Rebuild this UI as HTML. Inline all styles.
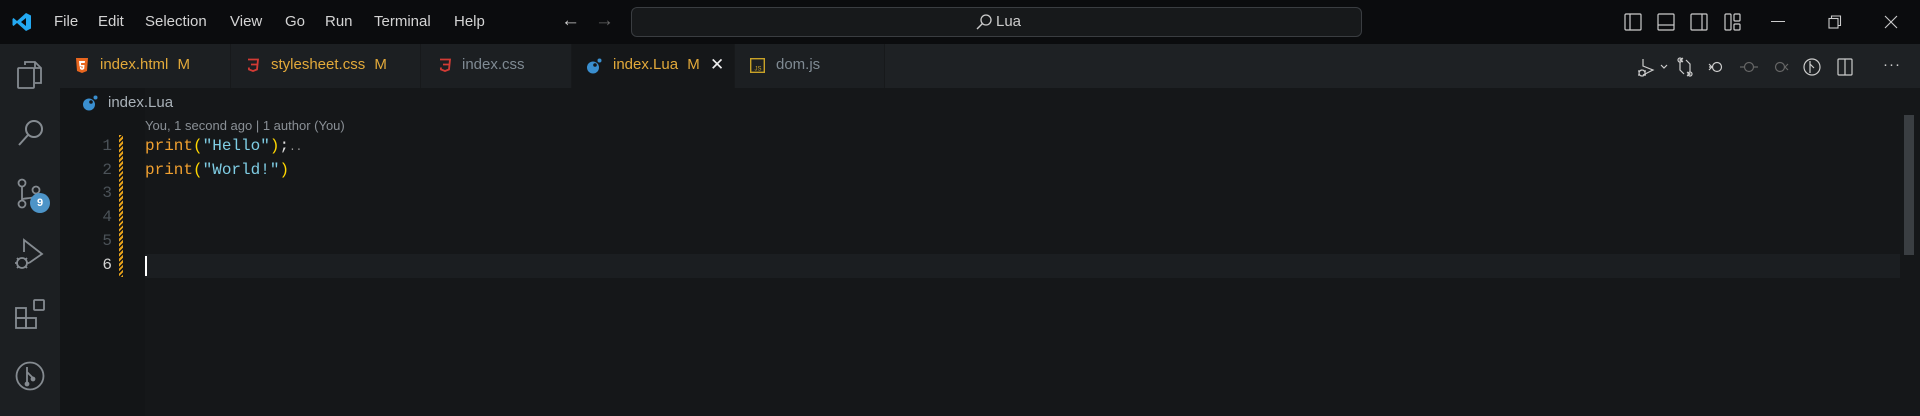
<!DOCTYPE html>
<html><head><meta charset="utf-8"><style>
*{margin:0;padding:0;box-sizing:border-box}
body{width:1920px;height:416px;background:#151719;overflow:hidden;position:relative;font-family:"Liberation Sans",sans-serif;color:#ccc}
.a{position:absolute}
.title{left:0;top:0;width:1920px;height:44px;background:#0b0c0e}
.menu{top:13px;font-size:15px;color:#d4d4d4}
.act{left:0;top:44px;width:60px;height:372px;background:#1c1f22}
.tabs{left:60px;top:44px;width:1860px;height:44px;background:#1e2124}
.tab{top:44px;height:44px;border-right:1px solid #17191b;background:#1c1f22}
.tt{top:56px;font-size:15px}
.mono{font-family:"Liberation Mono",monospace;font-size:16px}
.ln{width:40px;text-align:right;left:72px;color:#4b5258}
svg{position:absolute}
</style></head><body>
<div class="a title"></div>
<svg style="left:12px;top:12px" width="20" height="20" viewBox="0 0 20 20"><path d="M14 1 L19 3.5 V16.5 L14 19 L5 11 L1.5 14 L0.5 13 V7 L1.5 6 L5 9 Z M14 6 L9 10 L14 14 Z" fill="#23a9f2"/></svg>
<div class="a menu" style="left:54px">File</div>
<div class="a menu" style="left:98px">Edit</div>
<div class="a menu" style="left:145px">Selection</div>
<div class="a menu" style="left:230px">View</div>
<div class="a menu" style="left:285px">Go</div>
<div class="a menu" style="left:325px">Run</div>
<div class="a menu" style="left:374px">Terminal</div>
<div class="a menu" style="left:454px">Help</div>
<div class="a" style="left:561px;top:10px;font-size:19px;color:#ccc">←</div>
<div class="a" style="left:595px;top:10px;font-size:19px;color:#666">→</div>
<div class="a" style="left:631px;top:7px;width:731px;height:30px;border:1px solid #3a3d41;border-radius:6px;background:#17191b"></div>
<svg style="left:975px;top:13px" width="18" height="18" viewBox="0 0 18 18"><circle cx="11" cy="7" r="5" fill="none" stroke="#ccc" stroke-width="1.3"/><path d="M7.5 10.5 L2 16" stroke="#ccc" stroke-width="1.4"/></svg>
<div class="a" style="left:996px;top:13px;font-size:15px;color:#ccc">Lua</div>
<svg style="left:1624px;top:13px" width="140" height="18" viewBox="0 0 140 18" fill="none" stroke="#ccc" stroke-width="1.2"><rect x="1" y="1" width="16" height="16" rx="1"/><path d="M6 1v16"/><rect x="34" y="1" width="16" height="16" rx="1"/><path d="M34 12h16"/><rect x="67" y="1" width="16" height="16" rx="1"/><path d="M78 1v16"/><rect x="101" y="1" width="6" height="16" rx="1"/><rect x="110" y="1" width="6" height="7" rx="1"/><rect x="110" y="11" width="6" height="6" rx="1"/></svg>
<div class="a" style="left:1771px;top:21px;width:14px;height:1px;background:#ccc"></div>
<svg style="left:1828px;top:15px" width="14" height="14" viewBox="0 0 14 14" fill="none" stroke="#ccc" stroke-width="1.1"><rect x="1" y="3.5" width="9" height="9.5"/><path d="M3.5 3.5V1h9v9.5H10"/></svg>
<svg style="left:1884px;top:15px" width="14" height="14" viewBox="0 0 14 14" stroke="#ccc" stroke-width="1.1"><path d="M1 1L13 13M13 1L1 13"/></svg>

<div class="a act"></div>
<svg style="left:16px;top:60px" width="28" height="30" viewBox="0 0 28 30" fill="none" stroke="#858b91" stroke-width="1.8"><path d="M9 5V2h10l6 6v15h-6"/><path d="M19 2v6h6"/><rect x="2" y="8" width="16" height="20" rx="1"/></svg>
<svg style="left:16px;top:118px" width="30" height="30" viewBox="0 0 30 30" fill="none" stroke="#858b91" stroke-width="2"><circle cx="18" cy="11" r="8"/><path d="M12 17L3 27"/></svg>
<svg style="left:14px;top:178px" width="30" height="32" viewBox="0 0 30 32" fill="none" stroke="#858b91" stroke-width="1.8"><circle cx="8" cy="5" r="3.5"/><circle cx="8" cy="26" r="3.5"/><circle cx="22" cy="12" r="3.5"/><path d="M8 9v13M22 16c0 6-14 3-14 6"/></svg>
<div class="a" style="left:30px;top:193px;width:20px;height:20px;border-radius:50%;background:#4d94c8;color:#fff;font-size:11px;font-weight:bold;text-align:center;line-height:20px">9</div>
<svg style="left:14px;top:238px" width="32" height="32" viewBox="0 0 32 32" fill="none" stroke="#858b91" stroke-width="1.8"><path d="M10 14V2l18 14-13 9"/><circle cx="8" cy="25" r="5"/><path d="M1 25h3M12 25h3M3 20l2 2M13 20l-2 2M3 30l2-2M13 30l-2-2"/></svg>
<svg style="left:14px;top:298px" width="32" height="32" viewBox="0 0 32 32" fill="none" stroke="#858b91" stroke-width="1.8"><rect x="2" y="10" width="10" height="10"/><rect x="2" y="20" width="10" height="10"/><rect x="12" y="20" width="10" height="10"/><rect x="20" y="2" width="10" height="10" rx="1"/></svg>
<svg style="left:14px;top:360px" width="32" height="32" viewBox="0 0 32 32" fill="none" stroke="#858b91" stroke-width="1.8"><circle cx="16" cy="16" r="13.5"/><path d="M13 7v17M13 12l6 6v3" /><circle cx="13" cy="24" r="1.5" fill="#858b91"/><circle cx="19" cy="19" r="1.5" fill="#858b91"/></svg>

<div class="a tabs"></div>
<div class="a tab" style="left:60px;width:171px"></div>
<div class="a tab" style="left:231px;width:190px"></div>
<div class="a tab" style="left:421px;width:151px"></div>
<div class="a tab" style="left:572px;width:163px;background:#151719"></div>
<div class="a tab" style="left:735px;width:150px"></div>
<svg style="left:76px;top:58px" width="12" height="15" viewBox="0 0 12 15"><path d="M0 0h12l-1 13-5 2-5-2z" fill="#e8661f"/><path d="M3 3h6l-.3 2H5l.1 2h3.4l-.3 4L6 12l-2-1-.1-2h1.5l.1 1 .5.2.6-.2.1-1.5H3.5z" fill="#fff"/></svg>
<div class="a tt" style="left:100px;color:#e2a93a">index.html <span style="margin-left:5px">M</span></div>
<svg style="left:247px;top:58px" width="12" height="14" viewBox="0 0 12 14" fill="none" stroke="#d23b35" stroke-width="1.8"><path d="M1 1.5h10l-1 10-4 1.5-4-1.5-.2-2M4 6.5h6"/></svg>
<div class="a tt" style="left:271px;color:#e2a93a">stylesheet.css <span style="margin-left:5px">M</span></div>
<svg style="left:439px;top:58px" width="12" height="14" viewBox="0 0 12 14" fill="none" stroke="#d23b35" stroke-width="1.8"><path d="M1 1.5h10l-1 10-4 1.5-4-1.5-.2-2M4 6.5h6"/></svg>
<div class="a tt" style="left:462px;color:#7f8a93">index.css</div>
<svg style="left:586px;top:58px" width="16" height="16" viewBox="0 0 16 16"><circle cx="7" cy="9.5" r="6" fill="#3a8fd0"/><circle cx="13.5" cy="2.5" r="2" fill="#3a8fd0"/><circle cx="9" cy="7" r="1.8" fill="#151719"/></svg>
<div class="a tt" style="left:613px;color:#e2a93a">index.Lua <span style="margin-left:5px">M</span></div>
<div class="a" style="left:710px;top:55px;font-size:17px;color:#eee">✕</div>
<svg style="left:750px;top:58px" width="15" height="15" viewBox="0 0 15 15"><rect x=".7" y=".7" width="13.6" height="13.6" fill="none" stroke="#c9a227" stroke-width="1.4"/><text x="4.5" y="12.5" font-size="6" fill="#c9a227" font-family="Liberation Sans">JS</text></svg>
<div class="a tt" style="left:776px;color:#7f8a93">dom.js</div>

<svg style="left:1636px;top:56px" width="250" height="22" viewBox="0 0 250 22" fill="none" stroke="#ccc" stroke-width="1.2"><path d="M7 3v7l10 4-10 5M6 14a3 3 0 1 0 0.1 0M2 15h2M8 15h2M2 19h2M8 19h2"/><path d="M25 9l3 3 3-3"/><circle cx="44" cy="4" r="2"/><circle cx="54" cy="18" r="2"/><path d="M44 6v8l4 4M54 16V8l-4-4M47 2l-3 2 3 2M51 16l3 2-3 2"/><circle cx="81" cy="11" r="4.5"/><path d="M76 11l-3-3M73 11h3M76 11l-3 3"/><g stroke="#666"><circle cx="113" cy="11" r="4.5"/><path d="M104 11h4M118 11h4"/><circle cx="144" cy="11" r="4.5"/><path d="M149 11l3-3M149 11l3 3"/></g><circle cx="176" cy="11" r="8"/><path d="M174 5v12M174 8l4 4"/><rect x="202" y="3" width="14" height="16" rx="1"/><path d="M209 3v16"/></svg>
<div class="a" style="left:1883px;top:56px;font-size:15px;color:#ccc;letter-spacing:1px">···</div>

<div class="a" style="left:60px;top:88px;width:85px;height:328px;background:#131517"></div>
<svg style="left:82px;top:95px" width="16" height="16" viewBox="0 0 16 16"><circle cx="7" cy="9.5" r="6" fill="#3a8fd0"/><circle cx="13.5" cy="2.5" r="2" fill="#3a8fd0"/><circle cx="9" cy="7" r="1.8" fill="#151719"/></svg>
<div class="a" style="left:108px;top:94px;font-size:15px;color:#a9b1b8">index.Lua</div>
<div class="a" style="left:145px;top:118px;font-size:13px;color:#8a9096">You, 1 second ago | 1 author (You)</div>

<div class="a" style="left:145px;top:254px;width:1755px;height:24px;background:#1b1e21"></div>
<div class="a" style="left:145px;top:256px;width:2px;height:20px;background:#fff"></div>
<div class="a" style="left:119px;top:135px;width:4px;height:142px;background:repeating-linear-gradient(135deg,#e8a21a 0 2px,#151719 2px 3.5px)"></div>
<div class="a mono ln" style="top:137px">1</div>
<div class="a mono ln" style="top:161px">2</div>
<div class="a mono ln" style="top:184px">3</div>
<div class="a mono ln" style="top:208px">4</div>
<div class="a mono ln" style="top:232px">5</div>
<div class="a mono ln" style="top:256px;color:#d4d4d4">6</div>
<div class="a mono" style="left:145px;top:137px;white-space:pre"><span style="color:#f0a030">print</span><span style="color:#ffd700">(</span><span style="color:#7fcde4">"Hello"</span><span style="color:#ffd700">)</span><span style="color:#ddd">;</span><span style="color:#999;font-size:11px">..</span></div>
<div class="a mono" style="left:145px;top:161px;white-space:pre"><span style="color:#f0a030">print</span><span style="color:#ffd700">(</span><span style="color:#7fcde4">"World!"</span><span style="color:#ffd700">)</span></div>
<div class="a" style="left:1904px;top:115px;width:10px;height:140px;background:#3a3e42"></div>
</body></html>
